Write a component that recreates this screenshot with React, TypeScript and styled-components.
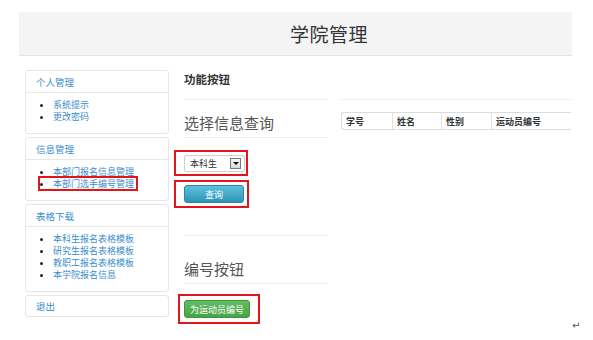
import React from "react";
import styled, { createGlobalStyle } from "styled-components";

const Global = createGlobalStyle`
  html, body { margin: 0; padding: 0; background: #fff; }
  body {
    font-family: "Liberation Sans", "Noto Sans CJK SC", sans-serif;
    width: 593px; height: 340px; overflow: hidden; position: relative;
  }
  * { box-sizing: border-box; }
`;

const Page = styled.div`
  position: relative;
  width: 593px;
  height: 340px;
  padding-top: 12px;
`;

const Header = styled.header`
  margin: 0 21px 0 19px;
  height: 44px;
  background: #f4f4f4;
  border-bottom: 1px solid #e4e4e4;
  display: flex;
  align-items: center;
  padding-left: 271px;
`;

const Title = styled.h1`
  margin: 0;
  font-family: "Noto Sans CJK SC", sans-serif;
  font-weight: 400;
  font-size: 19px;
  letter-spacing: 0.5px;
  color: #333;
`;

const Body = styled.div`
  display: flex;
  margin: 14px 0 0 25px;
`;

const Sidebar = styled.aside`
  width: 144px;
  display: flex;
  flex-direction: column;
  gap: 3px;
`;

const Panel = styled.section`
  border: 1px solid #e6e6e6;
  border-radius: 3px;
  background: #fff;
`;

const PanelHead = styled.div<{ $last?: boolean }>`
  height: ${(p) => (p.$last ? "20px" : "22px")};
  padding-left: 10px;
  display: flex;
  align-items: center;
  font-size: 9.5px;
  color: #3a8ccc;
  border-bottom: ${(p) => (p.$last ? "none" : "1px solid #e8e8e8")};
  font-family: "Noto Sans CJK SC", sans-serif;
`;

const List = styled.ul`
  margin: 0;
  padding: 6px 0 10px 27px;
  list-style: disc;
  color: #222;
  font-size: 9px;
`;

const Item = styled.li`
  line-height: 12px;
  height: 12px;
  font-family: "Noto Sans CJK SC", sans-serif;
  & > span {
    color: #3a8ccc;
  }
`;

const Marked = styled.span`
  outline: 2px solid #e3151a;
  outline-offset: 0px;
  margin-left: -13px;
  padding: 0 2px 0 13px;
  display: inline-block;
  line-height: 11px;
`;

const Main = styled.main`
  display: flex;
  margin-left: 15px;
`;

const LeftCol = styled.div`
  width: 144px;
  display: flex;
  flex-direction: column;
`;

const SubTitle = styled.div`
  font-family: "Noto Sans CJK SC", sans-serif;
  font-weight: 700;
  font-size: 11.5px;
  color: #333;
  height: 29px;
  padding-top: 1px;
`;

const Rule = styled.hr`
  margin: 0;
  border: 0;
  border-top: 1px solid #ececec;
  width: 100%;
`;

const Spacer = styled.div<{ $h: number }>`
  height: ${(p) => p.$h}px;
  flex: none;
`;

const SectionTitle = styled.div<{ $top: number }>`
  font-family: "Noto Sans CJK SC", sans-serif;
  font-size: 15px;
  color: #555;
  margin-top: ${(p) => p.$top}px;
  height: 25px;
  line-height: 22px;
`;

const RedBox = styled.div<{ $w: number; $h: number; $dx: number }>`
  width: ${(p) => p.$w}px;
  height: ${(p) => p.$h}px;
  margin-left: ${(p) => -p.$dx}px;
  padding-left: ${(p) => p.$dx - 2}px;
  border: 2px solid #e3151a;
  display: flex;
  align-items: center;
`;

const Select = styled.div`
  width: 61px;
  height: 17px;
  border: 1px solid #cfcfcf;
  border-radius: 2px;
  background: #fff;
  display: flex;
  align-items: center;
  justify-content: space-between;
  padding: 0 3px 0 5px;
  font-family: "Noto Sans CJK SC", sans-serif;
  font-size: 9px;
  color: #333;
`;

const Arrow = styled.div`
  width: 11px;
  height: 11px;
  border: 1px solid #777;
  background: linear-gradient(#f6f6f6, #d8d8d8);
  display: flex;
  align-items: center;
  justify-content: center;
  &::after {
    content: "";
    border-left: 3px solid transparent;
    border-right: 3px solid transparent;
    border-top: 3px solid #111;
  }
`;

const Button = styled.div<{ $kind: "info" | "success"; $w: number }>`
  width: ${(p) => p.$w}px;
  height: 18px;
  border-radius: 3px;
  display: flex;
  align-items: center;
  justify-content: center;
  font-family: "Noto Sans CJK SC", sans-serif;
  font-size: 9px;
  color: #fff;
  background: ${(p) =>
    p.$kind === "info"
      ? "linear-gradient(#5ec0dd, #2f95b5)"
      : "linear-gradient(#64bd63, #46a546)"};
  border: 1px solid ${(p) => (p.$kind === "info" ? "#2b87a5" : "#3d953d")};
`;

const RightCol = styled.div`
  width: 230px;
  margin-left: 13px;
  display: flex;
  flex-direction: column;
`;

const Table = styled.div`
  margin-top: 12px;
  display: grid;
  grid-template-columns: 50px 49px 50px 1fr;
  border: 1px solid #dcdcdc;
  border-right: none;
  border-radius: 3px 0 0 3px;
  height: 18px;
`;

const Th = styled.div`
  font-family: "Noto Sans CJK SC", sans-serif;
  font-weight: 700;
  font-size: 9px;
  color: #333;
  padding-left: 4px;
  display: flex;
  align-items: center;
  & + & {
    border-left: 1px solid #e2e2e2;
  }
`;

const Return = styled.span`
  position: absolute;
  left: 572px;
  top: 320px;
  font-size: 10px;
  color: #555;
  font-family: "DejaVu Sans", sans-serif;
`;

export default function App() {
  return (
    <Page>
      <Global />
      <Header>
        <Title>学院管理</Title>
      </Header>
      <Body>
        <Sidebar>
          <Panel>
            <PanelHead>个人管理</PanelHead>
            <List>
              <Item><span>系统提示</span></Item>
              <Item><span>更改密码</span></Item>
            </List>
          </Panel>
          <Panel>
            <PanelHead>信息管理</PanelHead>
            <List>
              <Item><span>本部门报名信息管理</span></Item>
              <Item><Marked>本部门选手编号管理</Marked></Item>
            </List>
          </Panel>
          <Panel>
            <PanelHead>表格下载</PanelHead>
            <List>
              <Item><span>本科生报名表格模板</span></Item>
              <Item><span>研究生报名表格模板</span></Item>
              <Item><span>教职工报名表格模板</span></Item>
              <Item><span>本学院报名信息</span></Item>
            </List>
          </Panel>
          <Panel>
            <PanelHead $last>退出</PanelHead>
          </Panel>
        </Sidebar>
        <Main>
          <LeftCol>
            <SubTitle>功能按钮</SubTitle>
            <Rule />
            <SectionTitle $top={12}>选择信息查询</SectionTitle>
            <Rule />
            <Spacer $h={12} />
            <RedBox $w={74} $h={26} $dx={10}>
              <Select>
                本科生
                <Arrow />
              </Select>
            </RedBox>
            <Spacer $h={4} />
            <RedBox $w={75} $h={28} $dx={10}>
              <Button $kind="info" $w={60}>查询</Button>
            </RedBox>
            <Spacer $h={27} />
            <Rule />
            <SectionTitle $top={22}>编号按钮</SectionTitle>
            <Rule />
            <Spacer $h={10} />
            <RedBox $w={82} $h={30} $dx={6}>
              <Button $kind="success" $w={66}>为运动员编号</Button>
            </RedBox>
          </LeftCol>
          <RightCol>
            <Spacer $h={29} />
            <Rule />
            <Table>
              <Th>学号</Th>
              <Th>姓名</Th>
              <Th>性别</Th>
              <Th>运动员编号</Th>
            </Table>
          </RightCol>
        </Main>
      </Body>
      <Return>↵</Return>
    </Page>
  );
}
